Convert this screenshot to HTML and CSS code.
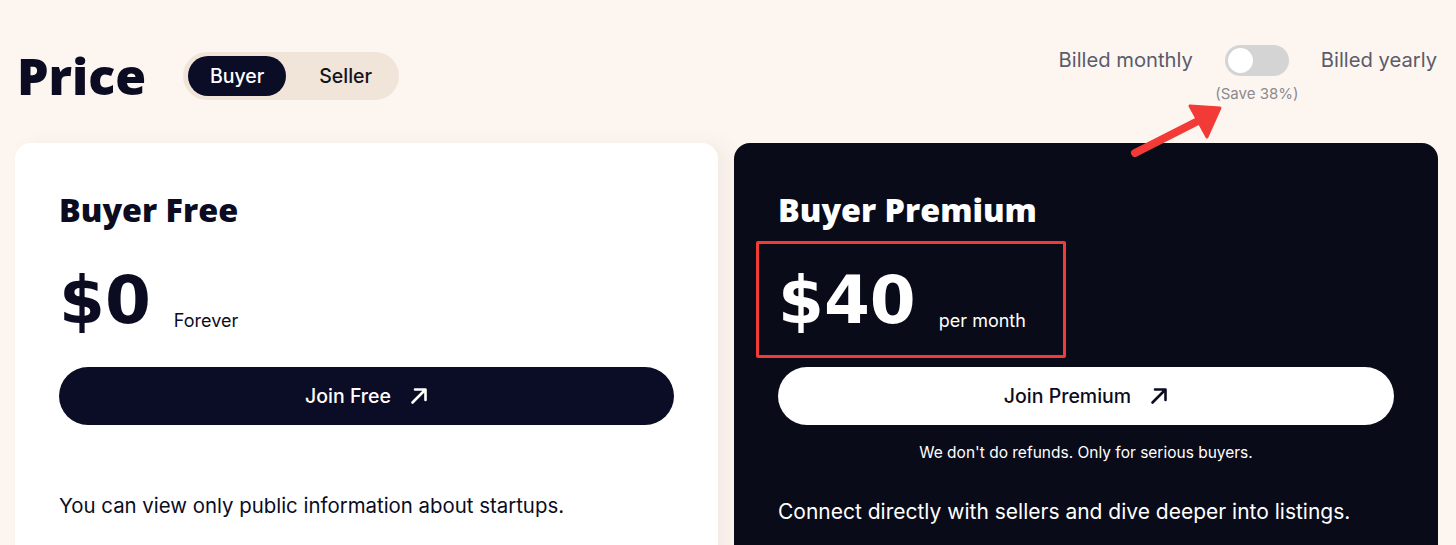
FILE: index.html
```html
<!DOCTYPE html>
<html lang="en">
<head>
<meta charset="utf-8">
<title>Price</title>
<link rel="stylesheet" href="styles.css">
</head>
<body>
<div class="page">
  <header class="header">
    <div class="title-group">
      <h1 class="title">Price</h1>
      <div class="segmented">
        <button class="seg seg-active">Buyer</button>
        <button class="seg">Seller</button>
      </div>
    </div>
    <div class="billing">
      <span class="billing-label">Billed monthly</span>
      <div class="switch-col">
        <span class="switch"><span class="knob"></span></span>
        <span class="save">(Save 38%)</span>
      </div>
      <span class="billing-label">Billed yearly</span>
    </div>
  </header>

  <main class="cards">
    <section class="card card-light">
      <h2 class="plan">Buyer Free</h2>
      <div class="price-row">
        <span class="amount">$0</span>
        <span class="period">Forever</span>
      </div>
      <button class="cta cta-dark">Join Free
        <svg class="cta-icon" viewBox="0 0 18 18" width="18" height="18"><path d="M2.5 15.5 L15 3 M5 2.5 H15.5 V13" fill="none" stroke="currentColor" stroke-width="2.6" stroke-linecap="round" stroke-linejoin="round"/></svg>
      </button>
      <p class="desc desc-free">You can view only public information about startups.</p>
    </section>

    <section class="card card-dark">
      <h2 class="plan">Buyer Premium</h2>
      <div class="price-row">
        <span class="amount">$40</span>
        <span class="period">per month</span>
        <span class="highlight-box"></span>
      </div>
      <button class="cta cta-light">Join Premium
        <svg class="cta-icon" viewBox="0 0 18 18" width="18" height="18"><path d="M2.5 15.5 L15 3 M5 2.5 H15.5 V13" fill="none" stroke="currentColor" stroke-width="2.6" stroke-linecap="round" stroke-linejoin="round"/></svg>
      </button>
      <p class="note">We don't do refunds. Only for serious buyers.</p>
      <p class="desc desc-premium">Connect directly with sellers and dive deeper into listings.</p>
    </section>
  </main>

  <svg class="callout-arrow" width="110" height="70" viewBox="0 0 110 70">
    <line x1="7" y1="55" x2="74" y2="21" stroke="#f23a36" stroke-width="8" stroke-linecap="round"/>
    <polygon points="92,10 62,8 79,39" fill="#f23a36" stroke="#f23a36" stroke-width="3" stroke-linejoin="round"/>
  </svg>
</div>
</body>
</html>
```

FILE: styles.css
```css
* { box-sizing: border-box; }

html, body {
  margin: 0;
  background: #fdf6f0;
  font-family: "Inter", "Noto Sans", sans-serif;
  color: #0b0c22;
  overflow: hidden;
}

.page {
  position: relative;
  height: 545px;
  padding: 0 18px 0 15px;
}

.header {
  height: 143px;
  display: flex;
  justify-content: space-between;
  align-items: flex-start;
}

.title-group {
  display: flex;
  align-items: center;
  gap: 37px;
  padding-top: 52px;
  padding-left: 2px;
}

.title {
  margin: 0;
  font-family: "Open Sans", sans-serif;
  font-weight: 800;
  font-size: 50px;
  line-height: 48px;
  color: #0b0c22;
}

.segmented {
  display: flex;
  align-items: center;
  height: 48px;
  padding: 4px 27px 4px 5px;
  background: #f0e5d8;
  border-radius: 24px;
  gap: 33px;
}

.seg {
  border: 0;
  background: transparent;
  font-family: inherit;
  font-size: 19.5px;
  font-weight: 500;
  color: #14141e;
  height: 40px;
  padding: 0;
  cursor: pointer;
}

.seg-active {
  background: #0b0c26;
  color: #fff;
  border-radius: 20px;
  width: 98px;
}

.billing {
  display: flex;
  align-items: flex-start;
  gap: 32px;
  padding-top: 45px;
  padding-right: 1px;
}

.billing-label {
  font-size: 20.2px;
  color: #5b5b6b;
  line-height: 30px;
}

.switch-col {
  display: flex;
  flex-direction: column;
  align-items: center;
  gap: 8px;
  width: 64px;
}

.switch {
  display: flex;
  align-items: center;
  width: 64px;
  height: 31px;
  padding: 3px;
  border-radius: 16px;
  background: #d4d4d4;
}

.knob {
  width: 25px;
  height: 25px;
  border-radius: 50%;
  background: #fff;
}

.save {
  font-size: 15px;
  color: #8a8a92;
  white-space: nowrap;
}

.cards {
  display: grid;
  grid-template-columns: 703px 704px;
  gap: 16px;
}

.card {
  height: 420px;
  border-radius: 16px 16px 0 0;
  padding: 46px 44px 0 44px;
}

.card-light {
  background: #fff;
  box-shadow: 10px 0 18px rgba(120, 100, 80, 0.07);
}

.card-dark {
  background: #0a0b19;
  color: #fff;
}

.plan {
  margin: 0;
  font-family: "Open Sans", sans-serif;
  font-weight: 800;
  font-size: 32.3px;
  line-height: 40px;
}

.price-row {
  position: relative;
  display: flex;
  align-items: baseline;
  gap: 23px;
  margin-top: 34px;
  height: 84px;
}

.amount {
  font-family: "DejaVu Sans", sans-serif;
  font-weight: 700;
  font-size: 66px;
  line-height: 76px;
}

.period {
  position: relative;
  top: 4px;
  font-size: 18px;
}

.highlight-box {
  position: absolute;
  left: -22px;
  top: -22px;
  width: 310px;
  height: 117px;
  border: 3px solid #f23a36;
  border-radius: 2px;
}

.cta {
  display: flex;
  justify-content: center;
  align-items: center;
  gap: 19px;
  width: 100%;
  height: 58px;
  margin-top: 20px;
  border: 0;
  border-radius: 29px;
  font-family: inherit;
  font-size: 19.5px;
  font-weight: 500;
  cursor: pointer;
}

.cta-dark {
  background: #0b0c26;
  color: #fff;
}

.cta-light {
  background: #fff;
  color: #0b0c22;
}

.cta-icon { display: block; }

.note {
  margin: 18px 0 0;
  text-align: center;
  font-size: 15.5px;
  line-height: 20px;
}

.desc {
  margin: 0;
  font-size: 20.4px;
  line-height: 26px;
}

.desc-free {
  margin-top: 68px;
}

.desc-premium {
  margin-top: 36px;
  font-size: 21px;
}

.callout-arrow {
  position: absolute;
  left: 1128px;
  top: 98px;
}
```
